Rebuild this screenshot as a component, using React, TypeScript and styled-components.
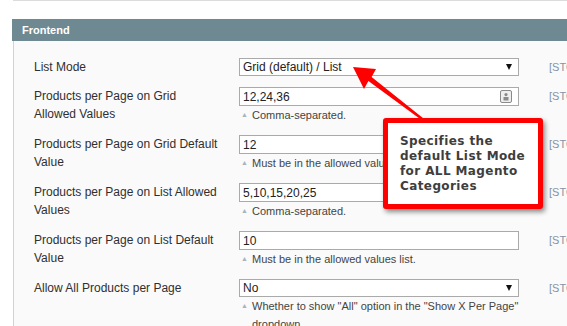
import React from "react";
import styled, { createGlobalStyle } from "styled-components";

const GlobalStyle = createGlobalStyle`
  body {
    margin: 0;
    background: #ffffff;
    font-family: "Liberation Sans", Arial, sans-serif;
  }
`;

const Page = styled.div`
  position: relative;
  width: 567px;
  height: 326px;
  overflow: hidden;
  background: #ffffff;
`;

const TopRule = styled.div`
  margin-left: 13px;
  border-top: 1px solid #dcdcdc;
  height: 18px;
`;

const Fieldset = styled.section`
  margin-left: 12px;
`;

const Legend = styled.div`
  height: 22px;
  line-height: 22px;
  padding-left: 10px;
  background: #6f8992;
  color: #ffffff;
  font-size: 11px;
  font-weight: bold;
`;

const Body = styled.div`
  margin-left: 1px;
  border-left: 1px solid #d2d2d2;
  background: #fafafa;
  padding: 17px 0 40px 20px;
`;

const Row = styled.div`
  display: grid;
  grid-template-columns: 205px 280px 1fr;
  padding-bottom: 11px;
`;

const Label = styled.div`
  width: 185px;
  font-size: 12px;
  line-height: 18px;
  color: #2f2f2f;
`;

const Control = styled.div`
  display: flex;
  flex-direction: column;
`;

const Field = styled.div<{ $tall?: boolean }>`
  position: relative;
  box-sizing: border-box;
  height: ${(p) => (p.$tall ? "19px" : "18px")};
  border: 1px solid #aaaaaa;
  background: #ffffff;
  display: flex;
  align-items: center;
  justify-content: space-between;
  padding: 0 6px 0 3px;
  font-size: 12px;
  color: #222222;
`;

const Arrow = styled.span`
  width: 0;
  height: 0;
  border-left: 3.5px solid transparent;
  border-right: 3.5px solid transparent;
  border-top: 6px solid #111111;
`;

const Note = styled.div`
  display: flex;
  font-size: 11px;
  line-height: 18px;
  color: #444444;
`;

const NoteMark = styled.span`
  flex: none;
  width: 13px;
  padding-left: 2px;
  box-sizing: border-box;
  font-size: 7px;
  color: #a9b3bb;
`;

const Scope = styled.div`
  padding-left: 30px;
  font-size: 11px;
  line-height: 18px;
  color: #8593a6;
  white-space: nowrap;
`;

const Callout = styled.div`
  position: absolute;
  left: 383px;
  top: 118px;
  width: 160px;
  height: 91px;
  box-sizing: border-box;
  border: 5px solid #ff0000;
  border-radius: 3px;
  background: #ffffff;
  box-shadow: 2px 3px 5px rgba(0, 0, 0, 0.45);
  padding: 11px 0 0 12px;
  font-family: "DejaVu Sans", Verdana, sans-serif;
  font-weight: bold;
  font-size: 12px;
  letter-spacing: 0.4px;
  line-height: 15px;
  color: #3e3e3e;
`;

const Overlay = styled.svg`
  position: absolute;
  left: 0;
  top: 0;
  pointer-events: none;
`;

const FillIcon = () => (
  <svg width="12" height="13" viewBox="0 0 12 13">
    <rect x="0.5" y="0.5" width="11" height="12" rx="1.5" fill="#eeeeee" stroke="#8a8a8a" />
    <circle cx="6" cy="4.6" r="1.6" fill="#8a8a8a" />
    <rect x="3.5" y="7" width="5" height="3.5" fill="#8a8a8a" />
  </svg>
);

type Setting = {
  label: string;
  value: string;
  kind: "select" | "text";
  note?: string;
  icon?: boolean;
};

const settings: Setting[] = [
  { label: "List Mode", value: "Grid (default) / List", kind: "select" },
  {
    label: "Products per Page on Grid Allowed Values",
    value: "12,24,36",
    kind: "text",
    note: "Comma-separated.",
    icon: true,
  },
  {
    label: "Products per Page on Grid Default Value",
    value: "12",
    kind: "text",
    note: "Must be in the allowed values list.",
  },
  {
    label: "Products per Page on List Allowed Values",
    value: "5,10,15,20,25",
    kind: "text",
    note: "Comma-separated.",
  },
  {
    label: "Products per Page on List Default Value",
    value: "10",
    kind: "text",
    note: "Must be in the allowed values list.",
  },
  {
    label: "Allow All Products per Page",
    value: "No",
    kind: "select",
    note: 'Whether to show "All" option in the "Show X Per Page" dropdown',
  },
];

const App = () => {
  return (
    <Page>
      <GlobalStyle />
      <TopRule />
      <Fieldset>
        <Legend>Frontend</Legend>
        <Body>
          {settings.map((s) => (
            <Row key={s.label}>
              <Label>{s.label}</Label>
              <Control>
                <Field $tall={s.kind === "text"}>
                  <span>{s.value}</span>
                  {s.kind === "select" && <Arrow />}
                  {s.icon && <FillIcon />}
                </Field>
                {s.note && (
                  <Note>
                    <NoteMark>▲</NoteMark>
                    <span>{s.note}</span>
                  </Note>
                )}
              </Control>
              <Scope>[STORE VIEW]</Scope>
            </Row>
          ))}
        </Body>
      </Fieldset>
      <Callout>
        Specifies the
        <br />
        default List Mode
        <br />
        for ALL Magento
        <br />
        Categories
      </Callout>
      <Overlay width="567" height="326" viewBox="0 0 567 326">
        <polygon
          points="353,67 376,69 371.6,77 424.8,119.4 423.2,121.2 368.4,81 364,89"
          fill="#ff0000"
        />
      </Overlay>
    </Page>
  );
};

export default App;
